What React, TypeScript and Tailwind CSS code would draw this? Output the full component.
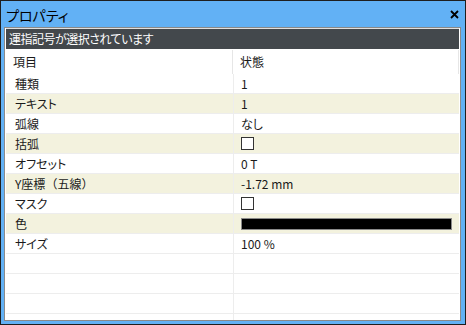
import React from "react";

const rows: { label: React.ReactNode; value: React.ReactNode }[] = [
  { label: "種類", value: "1" },
  { label: "テキスト", value: "1" },
  { label: "弧線", value: "なし" },
  { label: "括弧", value: "checkbox" },
  { label: "オフセット", value: "0 T" },
  {
    label: (
      <>
        Y座標<span className="[font-feature-settings:normal]">（五線）</span>
      </>
    ),
    value: "-1.72 mm",
  },
  { label: "マスク", value: "checkbox" },
  { label: "色", value: "color" },
  { label: "サイズ", value: "100 %" },
];

function Value({ v }: { v: React.ReactNode }) {
  if (v === "checkbox") {
    return <div className="w-[13px] h-[13px] border border-[#333333] bg-white" />;
  }
  if (v === "color") {
    return <div className="w-[211px] h-[12px] bg-black border border-[#8a8a8a]" />;
  }
  return <span>{v}</span>;
}

function Row({ label, value, shaded }: { label: React.ReactNode; value: React.ReactNode; shaded: boolean }) {
  return (
    <div
      className={`h-[20px] flex text-[12px] shrink-0 ml-[1px] mr-[1px] border-b border-[#ededed] ${
        shaded ? "bg-[#f3f2de]" : "bg-white"
      }`}
    >
      <div className="w-[228px] pl-[9px] flex items-center border-r border-[#ededed]">{label}</div>
      <div className="flex-1 pl-[7px] flex items-center">
        <Value v={value} />
      </div>
    </div>
  );
}

export default function App() {
  return (
    <div
      className="w-[466px] h-[325px] bg-[#62b1f5] border border-[#1e1e1e] flex flex-col text-[#1a1a1a] [font-feature-settings:'palt']"
      style={{ fontFamily: '"Noto Sans CJK JP", "Noto Sans", sans-serif' }}
    >
      {/* Title bar */}
      <div className="h-[26px] flex items-center justify-between pl-[5px] pr-[5px] shrink-0">
        <span className="text-[14px] leading-none text-black pt-[1px]">プロパティ</span>
        <svg width="9" height="9" viewBox="0 0 9 9" className="mr-[1px]">
          <path d="M1 1 L8 8 M8 1 L1 8" stroke="#000" strokeWidth="1.8" />
        </svg>
      </div>

      {/* Panel */}
      <div className="flex-1 ml-[3px] mr-[4px] mb-[3px] border border-[#8a8a8a] bg-white flex flex-col overflow-hidden">
        <div className="mx-[1px] h-[21px] bg-[#43484c] border-t border-[#e0e0e0] flex items-center pl-[3px] text-white text-[12px] tracking-[-0.5px]">
          運指記号が選択されています
        </div>
        <div className="h-[1px] shrink-0" />

        {/* Header */}
        <div className="h-[24px] flex text-[12px] shrink-0 ml-[1px]">
          <div className="w-[227px] pl-[7px] flex items-center border-r border-[#e6e6e6]">項目</div>
          <div className="flex-1 pl-[7px] flex items-center border-r border-[#e6e6e6] mr-[1px]">状態</div>
        </div>

        {/* Rows */}
        {rows.map((r, i) => (
          <Row key={i} label={r.label} value={r.value} shaded={i % 2 === 1} />
        ))}
        {[0, 1, 2].map((i) => (
          <Row key={`e${i}`} label="" value="" shaded={false} />
        ))}
        <div className="flex flex-1 ml-[1px] mr-[1px]">
          <div className="w-[228px] border-r border-[#ededed]" />
        </div>
      </div>
    </div>
  );
}
